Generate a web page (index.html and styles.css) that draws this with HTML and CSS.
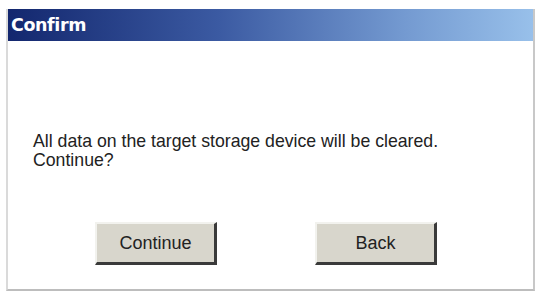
FILE: index.html
```html
<!DOCTYPE html>
<html>
<head>
<meta charset="utf-8">
<link rel="stylesheet" href="styles.css">
</head>
<body>
<div class="window">
  <div class="titlebar"><span class="title">Confirm</span></div>
  <div class="content">
    <p class="message">All data on the target storage device will be cleared.<br>Continue?</p>
    <div class="buttons">
      <button class="btn">Continue</button>
      <button class="btn">Back</button>
    </div>
  </div>
</div>
</body>
</html>
```

FILE: styles.css
```css
html, body {
  margin: 0;
  padding: 0;
  background: #ffffff;
}
body {
  width: 537px;
  height: 293px;
  overflow: hidden;
  font-family: "Liberation Sans", Arial, sans-serif;
}
.window {
  margin: 9px 2px 0 6px;
  height: 282px;
  box-sizing: border-box;
  border-left: 2px solid #dadada;
  border-right: 2px solid #c8c8c8;
  border-bottom: 2px solid #bdbdbd;
  display: flex;
  flex-direction: column;
}
.titlebar {
  height: 32px;
  background: linear-gradient(to right, #13276e 0%, #3b5aa2 40%, #7399d0 75%, #98c0ea 100%);
  display: flex;
  align-items: center;
  padding-left: 3px;
}
.title {
  color: #ffffff;
  font-family: "DejaVu Sans", Tahoma, sans-serif;
  font-weight: bold;
  font-size: 17.5px;
  letter-spacing: -0.4px;
}
.content {
  flex: 1;
  display: flex;
  flex-direction: column;
  padding: 0 0 0 25px;
}
.message {
  margin: 91px 0 0 0;
  font-size: 17.7px;
  line-height: 19px;
  color: #222222;
}
.buttons {
  display: flex;
  gap: 98px;
  margin: 52px 0 0 62px;
}
.btn {
  width: 122px;
  height: 43px;
  background: #d8d6cc;
  border: none;
  border-top: 2px solid #f2f2ee;
  border-left: 2px solid #f2f2ee;
  border-right: 3px solid #3a3a3a;
  border-bottom: 3px solid #3a3a3a;
  font-family: "Liberation Sans", Arial, sans-serif;
  font-size: 18px;
  color: #222222;
  padding: 0;
}
```
